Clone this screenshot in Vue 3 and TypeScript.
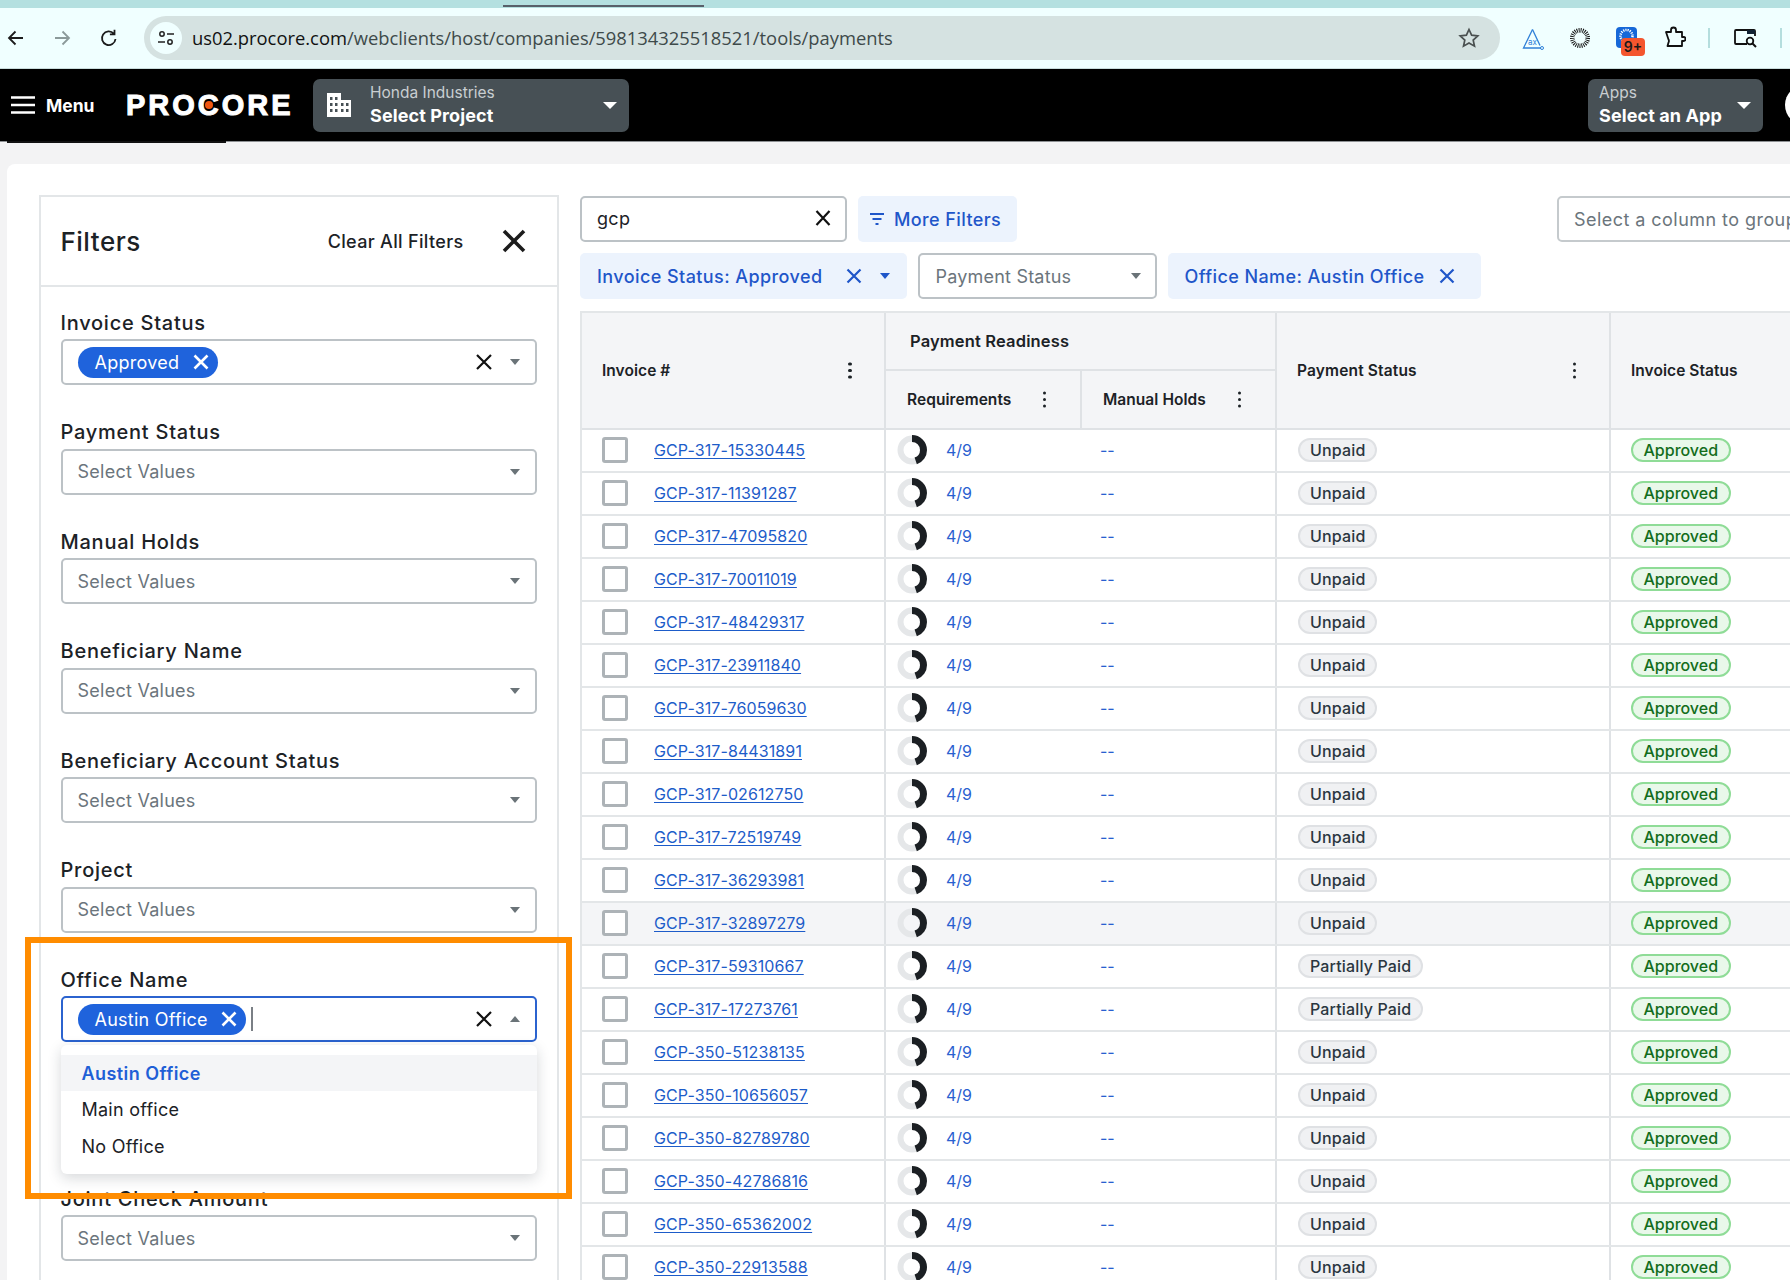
<script setup lang="ts">
interface Row { id: string; pay: string }
const partial = new Set(['59310667', '17273761'])
const ids317 = ['15330445','11391287','47095820','70011019','48429317','23911840','76059630','84431891','02612750','72519749','36293981','32897279','59310667','17273761']
const ids350 = ['51238135','10656057','82789780','42786816','65362002','22913588']
const rows: Row[] = [
  ...ids317.map(n => ({ id: 'GCP-317-' + n, pay: partial.has(n) ? 'Partially Paid' : 'Unpaid' })),
  ...ids350.map(n => ({ id: 'GCP-350-' + n, pay: 'Unpaid' })),
]
const plainFields = ['Payment Status','Manual Holds','Beneficiary Name','Beneficiary Account Status','Project']
</script>

<template>
  <div class="page">
    <div class="tabstrip"><div class="tabline"></div></div>
    <div class="browserbar">
      <svg class="b-ic" width="20" height="20" viewBox="0 0 20 20"><path d="M17 10H3.500M9.500 3.500 3 10l6.500 6.500" fill="none" stroke="#1c1c1c" stroke-width="1.800"/></svg>
      <svg class="b-ic fwd" width="20" height="20" viewBox="0 0 20 20"><path d="M3 10h13.500M10.500 3.500 17 10l-6.500 6.500" fill="none" stroke="#8b9a9a" stroke-width="1.800"/></svg>
      <svg class="b-ic rel" width="20" height="20" viewBox="0 0 20 20"><path d="M16.500 11a6.800 6.800 0 1 1-1.700-5.300M15.500 1.800v4.600h-4.600" fill="none" stroke="#1c1c1c" stroke-width="1.800"/></svg>
      <div class="urlpill">
        <span class="tune">
          <svg width="20" height="20" viewBox="0 0 20 20"><g fill="none" stroke="#222" stroke-width="1.500"><circle cx="6" cy="6" r="2.200"/><path d="M11 6h7M2 14h7"/><circle cx="14" cy="14" r="2.200"/></g></svg>
        </span>
        <span class="url"><span class="host">us02.procore.com</span>/webclients/host/companies/598134325518521/tools/payments</span>
        <svg class="star" width="22" height="22" viewBox="0 0 22 22"><path d="m11 2.500 2.600 5.700 6.200.7-4.600 4.200 1.300 6.100L11 16.100l-5.500 3.100 1.300-6.100-4.600-4.200 6.200-.7z" fill="none" stroke="#4a5050" stroke-width="1.700"/></svg>
      </div>
      <div class="ext">
        <svg class="e1" width="22" height="22" viewBox="0 0 22 22"><path d="M10.500 1.500 1.500 20H19" fill="none" stroke="#2f80d8" stroke-width="1.300"/><path d="M10.500 1.500 18 17.500" fill="none" stroke="#2f80d8" stroke-width="1.300"/><circle cx="20" cy="20" r="1.500" fill="none" stroke="#2f80d8"/><text x="6" y="17" font-size="8" fill="#2f80d8" font-family="Inter">ax</text></svg>
        <svg class="e2" width="20" height="20" viewBox="0 0 20 20"><circle cx="10" cy="10" r="7.500" fill="none" stroke="#111" stroke-width="5" stroke-dasharray="0.900 0.980"/><circle cx="10" cy="10" r="5.500" fill="#f0ffff"/></svg>
        <span class="e3">
          <svg width="21" height="21" viewBox="0 0 21 21"><rect width="21" height="21" rx="4" fill="#1668d8"/><circle cx="10.500" cy="9" r="6" fill="none" stroke="#fff" stroke-width="2.500" stroke-dasharray="1.200 1"/></svg>
          <span class="badge">9+</span>
        </span>
        <svg class="e4" width="22" height="22" viewBox="0 0 22 22"><path d="M2 6h5V4a2.500 2.500 0 0 1 5 0v2h6v5h1.500a2 2 0 0 1 0 4H18v5H3.500l1-3.500a3 3 0 0 0 0-3z" fill="none" stroke="#111" stroke-width="1.800" stroke-linejoin="round"/></svg>
        <i class="sep s1"></i>
        <svg class="e5" width="24" height="20" viewBox="0 0 24 20"><path d="M13 15H2a1 1 0 0 1-1-1V2a1 1 0 0 1 1-1h18a1 1 0 0 1 1 1v5" fill="none" stroke="#111" stroke-width="1.800"/><rect x="13" y="1" width="8" height="4" fill="#123"/><circle cx="16" cy="12" r="3.300" fill="none" stroke="#111" stroke-width="1.800"/><path d="m18.500 14.500 3.500 3.500" stroke="#111" stroke-width="2"/></svg>
        <i class="sep s2"></i>
      </div>
    </div>

    <header class="nav">
      <svg class="burger" width="24" height="18" viewBox="0 0 24 18"><path d="M0 1.500h24M0 9h24M0 16.500h24" stroke="#fff" stroke-width="2.600"/></svg>
      <span class="menu">Menu</span>
      <span class="logo">PROCORE<i class="dot"></i></span>
      <div class="navsel project">
        <svg width="24" height="24" viewBox="0 0 24 24"><path fill-rule="evenodd" d="M0 0h14v7h10v17H0zM3 4v3h2.500V4zm5 0v3h2.500V4zM3 10v3h2.500v-3zm5 0v3h2.500v-3zm6 0v3h2.500v-3zm5 0v3h2.500v-3zM3 16v3h2.500v-3zm5 0v3h2.500v-3zm6 0v3h2.500v-3zm5 0v3h2.500v-3z" fill="#fff"/></svg>
        <div class="navtext"><span class="small">Honda Industries</span><span class="big">Select Project</span></div>
        <i class="caret white"></i>
      </div>
      <div class="navsel apps">
        <div class="navtext"><span class="small">Apps</span><span class="big">Select an App</span></div>
        <i class="caret white"></i>
      </div>
      <span class="avatar"></span>
    </header>
    <div class="navline"></div>

    <div class="canvas">
      <div class="card">
        <aside class="panel">
          <div class="panelhead">
            <span class="ptitle">Filters</span>
            <span class="clear">Clear All Filters</span>
            <svg width="24" height="24" viewBox="0 0 24 24"><path d="m2 2 20 20M22 2 2 22" stroke="#1c1c1c" stroke-width="3.600"/></svg>
          </div>
          <div class="panelbody">
            <div class="field">
              <label>Invoice Status</label>
              <div class="control">
                <span class="chip">Approved
                  <svg width="16" height="16" viewBox="0 0 16 16"><path d="m1.500 1.500 13 13M14.500 1.500l-13 13" stroke="#fff" stroke-width="2.600"/></svg>
                </span>
                <svg class="clr" width="16" height="16" viewBox="0 0 16 16"><path d="m1 1 14 14M15 1 1 15" stroke="#111" stroke-width="2.200"/></svg>
                <i class="caret"></i>
              </div>
            </div>
            <div v-for="f in plainFields" :key="f" class="field">
              <label>{{ f }}</label>
              <div class="control"><span class="ph">Select Values</span><i class="caret push"></i></div>
            </div>
            <div class="field open">
              <label>Office Name</label>
              <div class="control focus">
                <span class="chip">Austin Office
                  <svg width="16" height="16" viewBox="0 0 16 16"><path d="m1.500 1.500 13 13M14.500 1.500l-13 13" stroke="#fff" stroke-width="2.600"/></svg>
                </span>
                <i class="cursor"></i>
                <svg class="clr" width="16" height="16" viewBox="0 0 16 16"><path d="m1 1 14 14M15 1 1 15" stroke="#111" stroke-width="2.200"/></svg>
                <i class="caret up"></i>
              </div>
              <div class="menu-list">
                <div class="opt sel">Austin Office</div>
                <div class="opt">Main office</div>
                <div class="opt">No Office</div>
              </div>
            </div>
            <div class="field">
              <label>Joint Check Amount</label>
              <div class="control"><span class="ph">Select Values</span><i class="caret push"></i></div>
            </div>
          </div>
        </aside>

        <main class="main">
          <div class="tools">
            <div class="search"><span class="q">gcp</span>
              <svg width="16" height="16" viewBox="0 0 16 16"><path d="m1.500 1 13 14M14.500 1l-13 14" stroke="#111" stroke-width="2.200"/></svg>
            </div>
            <div class="morebtn">
              <svg width="16" height="14" viewBox="0 0 16 14"><path d="M1 2h14M3.500 7h9M6.500 12h3" stroke="#1f56c9" stroke-width="2"/></svg>
              More Filters
            </div>
            <div class="group">Select a column to group</div>
          </div>
          <div class="tools second">
            <div class="fchip first">Invoice Status: Approved
              <svg class="fx" width="16" height="16" viewBox="0 0 16 16"><path d="m1.500 1.500 13 13M14.500 1.500l-13 13" stroke="#1f56c9" stroke-width="2.200"/></svg>
              <i class="caret blue"></i>
            </div>
            <div class="pselect"><span>Payment Status</span><i class="caret"></i></div>
            <div class="fchip office">Office Name: Austin Office
              <svg class="fx" width="16" height="16" viewBox="0 0 16 16"><path d="m1.500 1.500 13 13M14.500 1.500l-13 13" stroke="#1f56c9" stroke-width="2.200"/></svg>
            </div>
          </div>

          <div class="table">
            <div class="thead">
              <div class="th c1"><span>Invoice #</span><i class="dots"></i></div>
              <div class="th-group">
                <div class="th-top">Payment Readiness</div>
                <div class="th-subs">
                  <div class="th sub"><span>Requirements</span><i class="dots"></i></div>
                  <div class="th sub"><span>Manual Holds</span><i class="dots"></i></div>
                </div>
              </div>
              <div class="th c4"><span>Payment Status</span><i class="dots"></i></div>
              <div class="th c5"><span>Invoice Status</span></div>
            </div>
            <div v-for="(r, i) in rows" :key="r.id" class="tr" :class="{ hover: i === 11 }">
              <div class="td c1"><i class="check"></i><a class="link">{{ r.id }}</a></div>
              <div class="td c2">
                <svg class="donut" width="30" height="30" viewBox="0 0 30 30">
                  <circle cx="15" cy="15" r="11.500" fill="none" stroke="#e5e7e9" stroke-width="6"/>
                  <circle cx="15" cy="15" r="11.500" fill="none" stroke="#1b1f23" stroke-width="7" stroke-dasharray="32.100 72.300" transform="rotate(-90 15 15)"/>
                </svg>
                <span class="blue-t">4/9</span>
              </div>
              <div class="td c3"><span class="blue-t">--</span></div>
              <div class="td c4"><span class="pill gray">{{ r.pay }}</span></div>
              <div class="td c5"><span class="pill green">Approved</span></div>
            </div>
          </div>
        </main>
      </div>
    </div>
    <div class="callout"></div>
  </div>
</template>

<style>
html, body { margin: 0; background: #fff; }
</style>

<style scoped>
.page { position: relative; width: 1790px; height: 1280px; overflow: hidden; font-family: Inter, "Liberation Sans", sans-serif; color: #1c2226; background: #f3f3f4; }
.tabstrip { height: 8px; background: #b4e0e0; position: relative; }
.tabline { position: absolute; left: 503px; top: 5px; width: 201px; height: 2px; background: #58606a; }
.browserbar { height: 60px; background: #f0ffff; display: flex; align-items: center; border-bottom: 1px solid #c9dcdc; padding-left: 6px; box-sizing: content-box; }
.b-ic { flex: none; }
.fwd { margin-left: 26px; }
.rel { margin-left: 27px; }
.urlpill { margin-left: 25px; width: 1356px; height: 44px; border-radius: 22px; background: #d5e2e1; display: flex; align-items: center; padding: 0 20px 0 6px; box-sizing: border-box; flex: none; }
.tune { width: 32px; height: 32px; border-radius: 50%; background: #f0ffff; display: flex; align-items: center; justify-content: center; flex: none; }
.url { margin-left: 10px; padding-bottom: 2px; font-family: "Open Sans", sans-serif; font-size: 18.360px; color: #3e4a4a; white-space: nowrap; flex: 1; }
.host { color: #111; }
.star { flex: none; }
.ext { position: relative; flex: 1; align-self: stretch; }
.ext > * { position: absolute; }
.e1 { left: 22px; top: 20px; }
.e2 { left: 70px; top: 20px; }
.e3 { left: 116px; top: 19px; width: 21px; height: 21px; }
.e3 svg { display: block; }
.badge { position: absolute; left: 5px; top: 11px; width: 24px; height: 18px; border-radius: 4px; background: #f4562e; color: #1a1a1a; font-size: 14px; font-weight: 600; line-height: 18px; text-align: center; }
.e4 { left: 164px; top: 18px; }
.sep { width: 2px; height: 20px; background: #b4dede; top: 20px; }
.s1 { left: 208px; }
.e5 { left: 234px; top: 21px; }
.s2 { left: 280px; }

.nav { height: 72px; background: #000; display: flex; align-items: center; color: #fff; }
.burger { margin-left: 11px; flex: none; }
.menu { margin-left: 11px; font-size: 17.500px; font-weight: 700; flex: none; width: 47px; }
.logo { flex: none; position: relative; margin-left: 33px; font-family: "Liberation Sans", sans-serif; font-weight: 700; font-size: 29px; letter-spacing: 3px; line-height: 1; -webkit-text-stroke: 1px #fff; width: 187px; white-space: nowrap; }
.dot { position: absolute; left: 79px; top: 10.500px; width: 8px; height: 8px; border-radius: 50%; background: #f0560f; }
.navsel { height: 53px; background: #475055; border-radius: 7px; display: flex; align-items: center; box-sizing: border-box; flex: none; }
.project { width: 316px; padding: 0 12px 0 14px; }
.project svg { flex: none; }
.apps { width: 175px; margin-left: 959px; padding: 0 12px 0 11px; }
.navtext { display: flex; flex-direction: column; flex: 1; }
.project .navtext { margin-left: 19px; }
.small { font-size: 15.500px; line-height: 24px; color: #c9ced1; }
.big { font-size: 18px; font-weight: 700; line-height: 25px; margin-top: -2px; padding-bottom: 1px; color: #fff; letter-spacing: 0.1px; }
.caret { width: 0; height: 0; flex: none; border-left: 5px solid transparent; border-right: 5px solid transparent; border-top: 6px solid #6a7378; }
.caret.white { border-left-width: 7px; border-right-width: 7px; border-top: 7px solid #fff; }
.caret.blue { border-top-color: #1f56c9; }
.caret.up { border-top: 0; border-bottom: 6px solid #6a7378; }
.push { margin-left: auto; }
.avatar { flex: none; width: 40px; height: 40px; border-radius: 50%; background: #fff; margin-left: 22px; }
.navline { height: 1px; background: #8d9093; position: relative; }
.navline::before { content: ""; position: absolute; left: 7px; width: 219px; height: 2px; background: #111; }

.canvas { padding: 22px 0 0 7px; }
.card { width: 2000px; height: 1200px; box-sizing: border-box; background: #fff; border-radius: 8px 0 0 0; padding: 32px 32px 32px 31.500px; display: flex; align-items: flex-start; gap: 21.500px; }

.panel { flex: none; width: 520px; height: 1100px; box-sizing: border-box; border: 2px solid #e3e6e8; border-bottom: 0; margin-top: -1px; }
.panelhead { height: 90px; box-sizing: border-box; border-bottom: 2px solid #e3e6e8; display: flex; align-items: center; padding: 0 31px 0 20px; }
.ptitle { font-size: 26px; font-weight: 500; flex: 1; letter-spacing: 0.5px; }
.clear { font-size: 18px; font-weight: 500; margin-right: 38px; letter-spacing: 0.33px; }
.panelhead svg { flex: none; }
.panelbody { padding: 21.500px 20px 0 20px; }
.field { margin-bottom: 33.500px; position: relative; }
.field.open { margin-bottom: 143px; }
.field label { display: block; height: 28px; line-height: 28px; font-size: 20px; font-weight: 500; margin-bottom: 2.500px; letter-spacing: 0.75px; }
.control { height: 46px; box-sizing: border-box; border: 2px solid #bcc2c6; border-radius: 5px; display: flex; align-items: center; padding: 0 15px 0 15px; margin-bottom: -0.500px; }
.control.focus { border-color: #2b63cf; }
.ph { font-size: 18px; color: #6b757c; letter-spacing: 0.26px; }
.chip { display: inline-flex; align-items: center; height: 31px; padding: 0 9px 0 17px; border-radius: 16px; background: #1f63dc; color: #fff; font-size: 18px; gap: 13.500px; white-space: nowrap; letter-spacing: 0.25px; }
.cursor { width: 2px; height: 24px; background: #7a7f85; margin-left: 5px; }
.clr { margin-left: auto; margin-right: 18px; flex: none; }
.menu-list { position: absolute; left: 0; right: 0; top: 79px; background: #fff; border-radius: 6px; padding: 10px 0; box-shadow: 0 4px 14px rgba(30, 40, 50, 0.18); z-index: 3; }
.opt { height: 36.500px; line-height: 38px; padding-left: 21px; font-size: 18px; color: #1c2226; letter-spacing: 0.25px; }
.opt.sel { background: #f4f5f7; color: #1f5fd6; font-weight: 600; letter-spacing: 0.44px; }

.main { flex: none; width: 1277px; }
.tools { display: flex; gap: 11px; height: 46px; }
.second { margin-top: 11px; }
.search { width: 267px; box-sizing: border-box; border: 2px solid #bcc2c6; border-radius: 5px; display: flex; align-items: center; justify-content: space-between; padding: 0 14px 2px 15px; font-size: 18px; letter-spacing: 0.3px; }
.morebtn { width: 159px; box-sizing: border-box; background: #ecf3fd; border-radius: 5px; display: flex; align-items: center; gap: 9px; padding-left: 11px; color: #1f56c9; font-size: 18px; font-weight: 500; letter-spacing: 0.4px; }
.group { width: 300px; margin-left: auto; box-sizing: border-box; border: 2px solid #c5cacd; border-radius: 5px; padding-left: 15px; display: flex; align-items: center; font-size: 18px; color: #6b757c; white-space: nowrap; letter-spacing: 0.45px; overflow: hidden; }
.fchip { background: #ecf3fd; border-radius: 5px; display: flex; align-items: center; color: #1f56c9; font-size: 18px; font-weight: 500; box-sizing: border-box; padding-left: 17px; white-space: nowrap; letter-spacing: 0.42px; }
.first { width: 326.500px; }
.fx { margin-left: 23px; flex: none; }
.fchip .caret { margin-left: 18px; }
.office { width: 313px; letter-spacing: 0.4px; }
.office .fx { margin-left: 14px; }
.pselect { width: 239px; box-sizing: border-box; border: 2px solid #bcc2c6; border-radius: 5px; display: flex; align-items: center; justify-content: space-between; padding: 0 14px 0 16px; font-size: 18px; color: #6b757c; letter-spacing: 0.2px; }

.table { margin-top: 12px; border-left: 2px solid #e3e6e8; border-top: 2px solid #e3e6e8; }
.thead { display: grid; grid-template-columns: 304px 391px 334px 1fr; height: 115px; background: #f4f5f7; border-bottom: 2px solid #dfe2e5; box-sizing: content-box; }
.th { display: flex; align-items: center; justify-content: space-between; font-size: 15.500px; font-weight: 600; padding: 0 32.500px 0 20px; border-right: 2px solid #dfe2e5; box-sizing: border-box; letter-spacing: 0.05px; }
.c4.th { padding: 0 33px 0 20px; letter-spacing: 0.15px; }
.c5.th { border-right: 0; padding-left: 20px; }
.th-group { display: flex; flex-direction: column; border-right: 2px solid #dfe2e5; box-sizing: border-box; }
.th-top { height: 58px; box-sizing: border-box; border-bottom: 2px solid #dfe2e5; display: flex; align-items: center; padding-left: 24px; font-size: 16.500px; font-weight: 600; letter-spacing: 0.15px; }
.th-subs { flex: 1; display: grid; grid-template-columns: 196px 1fr; }
.sub { padding: 0 34px 0 21px; }
.sub:last-child { border-right: 0; padding: 0 34px 0 21px; }
.dots { flex: none; width: 3.500px; height: 3.500px; border-radius: 50%; background: #1c2226; box-shadow: 0 -6.500px 0 #1c2226, 0 6.500px 0 #1c2226; }
.tr { display: grid; grid-template-columns: 304px 196px 195px 334px 1fr; height: 43px; box-sizing: border-box; border-bottom: 2px solid #e3e6e8; }
.tr.hover { background: #f4f5f7; }
.td { display: flex; align-items: center; padding-bottom: 2px; }
.c1.td { padding-left: 20px; border-right: 2px solid #dfe2e5; }
.c2.td { padding-left: 11px; }
.c3.td { padding-left: 18px; border-right: 2px solid #dfe2e5; }
.c4.td { padding-left: 21px; border-right: 2px solid #dfe2e5; }
.c5.td { padding-left: 20px; }
.check { width: 26px; height: 26px; box-sizing: border-box; border: 3px solid #adb3b7; border-radius: 3px; background: #fff; flex: none; }
.link { margin-left: 26px; font-size: 16px; color: #1d5cc9; text-decoration: underline; text-underline-offset: 2px; letter-spacing: 0.1px; }
.donut { flex: none; }
.blue-t { font-size: 16px; color: #2a5fd0; }
.c2 .blue-t { margin-left: 19px; }
.pill { display: inline-flex; align-items: center; height: 24px; box-sizing: border-box; border-radius: 12px; padding: 0 10px; font-size: 16px; font-weight: 500; letter-spacing: 0.15px; border: 2px solid; white-space: nowrap; }
.gray { background: #f0f1f3; border-color: #dfe1e4; color: #2a3640; }
.green { background: #e9f8ea; border-color: #8fdc97; color: #136d1c; letter-spacing: 0; padding: 0 10.500px; }

.callout { position: absolute; left: 25px; top: 937px; width: 547px; height: 262px; box-sizing: border-box; border: 6px solid #ff8c00; pointer-events: none; z-index: 5; }
</style>
